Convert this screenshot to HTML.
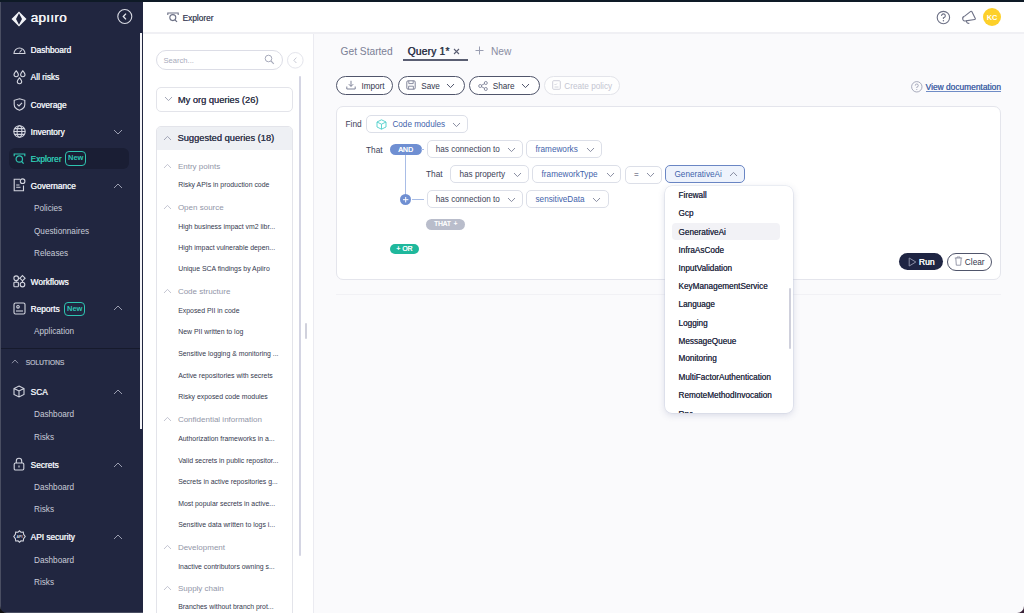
<!DOCTYPE html>
<html><head><meta charset="utf-8">
<style>
*{box-sizing:border-box;margin:0;padding:0}
html,body{width:1024px;height:613px;overflow:hidden;background:#fafafc;font-family:"Liberation Sans",sans-serif}
.a{position:absolute}
.t{position:absolute;line-height:12px;white-space:nowrap}
svg{position:absolute;overflow:visible}
/* sidebar */
#sb{position:absolute;left:0;top:0;width:143px;height:613px;background:#212640}
.si{color:#eceef4;font-size:8.3px;text-shadow:0.35px 0 0 currentColor;margin-top:0.4px}
.ss{color:#c9ccd8;font-size:8.2px;margin-top:0.5px}
.sic{fill:none;stroke:#d3d5df;stroke-width:1.1}
/* header */
#hd{position:absolute;left:143px;top:0;width:881px;height:34px;background:#fff;border-bottom:2px solid #f0f0f4}
/* middle */
#mid{position:absolute;left:143px;top:34px;width:171px;height:579px;background:#fff;border-right:1.4px solid #ebebf1}
.qh{color:#9296a8;font-size:8px;margin-top:0.8px}
.qi{color:#34384e;font-size:6.9px;margin-top:0.9px}
/* main */
.btn{position:absolute;height:19px;border:1px solid #50556b;border-radius:10px;background:#fff}
.box{position:absolute;border:1px solid #dcdfe8;border-radius:5px;background:#fff}
.bt{color:#3c4158;font-size:8.2px;margin-top:1px}
.bl{color:#3f63ab;font-size:8.2px;margin-top:1px}
.dd{color:#30344a;font-size:8.2px;margin-top:1px;text-shadow:0.1px 0 0 #30344a}
</style></head><body>


<!-- SIDEBAR -->
<div id="sb">
  <div class="a" style="left:0;top:0;width:1px;height:613px;background:#4a4e62"></div>
  <!-- logo -->
  <svg style="left:11px;top:11px" width="16" height="16" viewBox="0 0 16 16"><path d="M8 0.5 L15.5 8 L8 15.5 L0.5 8 Z M8 2.2 L11 8 L8 13.8 L5 8 Z" fill="#f2f3f7" fill-rule="evenodd"/></svg>
  <div class="t" style="left:30.5px;top:11px;font-size:13.5px;color:#f2f3f7;letter-spacing:0.3px;line-height:14px;text-shadow:0.4px 0 0 #f2f3f7">ap&#305;&#305;ro</div>
  <!-- collapse -->
  <svg style="left:117px;top:9px" width="16" height="16" viewBox="0 0 16 16"><circle cx="7.8" cy="7.5" r="7" fill="none" stroke="#d9dbe4" stroke-width="1.1"/><path d="M9 4.6 L6.3 7.5 L9 10.4" fill="none" stroke="#e9eaf0" stroke-width="1.3"/></svg>
  <!-- scrollbar -->
  <div class="a" style="left:140px;top:33px;width:2.1px;height:396px;background:#f4f4f7"></div>

  <!-- Dashboard -->
  <svg style="left:13px;top:44px" width="13" height="11" viewBox="0 0 13 11"><path class="sic" d="M1 9.5 A5.5 5.5 0 1 1 12 9.5 Z"/><path class="sic" d="M6.5 8.5 L9 5.5"/></svg>
  <div class="t si" style="left:30.5px;top:43.7px">Dashboard</div>
  <!-- All risks -->
  <svg style="left:13px;top:70px" width="13" height="14" viewBox="0 0 13 14"><path class="sic" d="M3.2 0.8 C4.6 2.6 5.4 3.6 5.4 4.5 A2.2 2.2 0 0 1 1 4.5 C1 3.6 1.8 2.6 3.2 0.8 Z M9.8 0.8 C11.2 2.6 12 3.6 12 4.5 A2.2 2.2 0 0 1 7.6 4.5 C7.6 3.6 8.4 2.6 9.8 0.8 Z M6.5 7.8 C7.9 9.6 8.7 10.6 8.7 11.5 A2.2 2.2 0 0 1 4.3 11.5 C4.3 10.6 5.1 9.6 6.5 7.8 Z"/></svg>
  <div class="t si" style="left:30.5px;top:70.8px">All risks</div>
  <!-- Coverage -->
  <svg style="left:13px;top:98px" width="13" height="13" viewBox="0 0 13 13"><path class="sic" d="M6.5 0.8 L11.8 2.3 V6.5 C11.8 9.5 9.3 11.3 6.5 12.3 C3.7 11.3 1.2 9.5 1.2 6.5 V2.3 Z"/><path class="sic" d="M4.2 6.3 L6 8 L9 4.8"/></svg>
  <div class="t si" style="left:30.5px;top:98.6px">Coverage</div>
  <!-- Inventory -->
  <svg style="left:13px;top:125px" width="13" height="13" viewBox="0 0 13 13"><circle class="sic" cx="6.5" cy="6.5" r="5.7"/><ellipse class="sic" cx="6.5" cy="6.5" rx="2.4" ry="5.7"/><path class="sic" d="M0.8 6.5 H12.2 M1.6 3.6 H11.4 M1.6 9.4 H11.4"/></svg>
  <div class="t si" style="left:30.5px;top:125.7px">Inventory</div>
  <svg style="left:113px;top:129px" width="10" height="6" viewBox="0 0 10 6"><path d="M1 1 L5 5 L9 1" fill="none" stroke="#9a9db0" stroke-width="1"/></svg>
  <!-- Explorer (active) -->
  <div class="a" style="left:9px;top:148px;width:120px;height:20.8px;border-radius:6px;background:#1a1e34"></div>
  <svg style="left:13px;top:153px" width="13" height="12" viewBox="0 0 13 12"><path d="M1.2 3.2 V1 H11.8 V3.2" fill="none" stroke="#2ec4b0" stroke-width="1.2"/><circle cx="6.3" cy="6" r="3.2" fill="none" stroke="#2ec4b0" stroke-width="1.2"/><path d="M8.6 8.4 L10.6 10.6" stroke="#2ec4b0" stroke-width="1.3"/></svg>
  <div class="t si" style="left:30.5px;top:153px;color:#2ec4b0">Explorer</div>
  <div class="a" style="left:65px;top:151px;width:21px;height:14.5px;border:1.1px solid #2ec4b0;border-radius:4px"></div>
  <div class="t" style="left:68px;top:152.3px;font-size:7.5px;color:#2ec4b0;font-weight:bold">New</div>
  <!-- Governance -->
  <svg style="left:13px;top:178px" width="13" height="14" viewBox="0 0 13 14"><path class="sic" d="M7 1.2 H1.2 V12.8 H10.5 V7.5"/><circle class="sic" cx="9.6" cy="3.2" r="2.3"/><path class="sic" d="M3.2 7 H6.5 M3.2 9.3 H7.5"/></svg>
  <div class="t si" style="left:30.5px;top:179.6px">Governance</div>
  <svg style="left:113px;top:183px" width="10" height="6" viewBox="0 0 10 6"><path d="M1 5 L5 1 L9 5" fill="none" stroke="#9a9db0" stroke-width="1"/></svg>
  <div class="t ss" style="left:34px;top:202.7px">Policies</div>
  <div class="t ss" style="left:34px;top:225.3px">Questionnaires</div>
  <div class="t ss" style="left:34px;top:247.9px">Releases</div>
  <!-- Workflows -->
  <svg style="left:13px;top:275px" width="13" height="13" viewBox="0 0 13 13"><circle class="sic" cx="3.2" cy="3.2" r="2.3"/><path class="sic" d="M9.5 0.6 L12.1 3.2 L9.5 5.8 L6.9 3.2 Z"/><rect class="sic" x="0.9" y="7.3" width="4.5" height="4.5" rx="0.8"/><circle class="sic" cx="9.5" cy="9.6" r="2.3"/><path class="sic" d="M5.5 3.2 H6.9 M3.2 5.5 V7.3 M9.5 5.8 V7.3"/></svg>
  <div class="t si" style="left:30.5px;top:275.3px">Workflows</div>
  <!-- Reports -->
  <svg style="left:13px;top:302px" width="13" height="13" viewBox="0 0 13 13"><rect class="sic" x="1" y="1" width="11" height="11" rx="1.5"/><circle class="sic" cx="5" cy="4.8" r="1.3"/><path class="sic" d="M3 9 H10"/></svg>
  <div class="t si" style="left:30.5px;top:302.4px">Reports</div>
  <div class="a" style="left:64px;top:301.6px;width:21px;height:14px;border:1.1px solid #2ec4b0;border-radius:4px"></div>
  <div class="t" style="left:67px;top:302.5px;font-size:7.5px;color:#2ec4b0;font-weight:bold">New</div>
  <svg style="left:113px;top:305px" width="10" height="6" viewBox="0 0 10 6"><path d="M1 5 L5 1 L9 5" fill="none" stroke="#9a9db0" stroke-width="1"/></svg>
  <div class="t ss" style="left:34px;top:325.6px">Application</div>
  <!-- separator -->
  <div class="a" style="left:1px;top:348px;width:139px;height:1px;background:#161a2c"></div>
  <svg style="left:11px;top:359px" width="8" height="5" viewBox="0 0 8 5"><path d="M1 4.2 L4 1 L7 4.2" fill="none" stroke="#9a9db0" stroke-width="0.9"/></svg>
  <div class="t" style="left:25.6px;top:356.6px;font-size:6.7px;color:#a9acbc;text-shadow:0.3px 0 0 #a9acbc">SOLUTIONS</div>
  <!-- SCA -->
  <svg style="left:13px;top:385px" width="12" height="13" viewBox="0 0 12 13"><path class="sic" d="M6 1 L11 3.5 V9.5 L6 12 L1 9.5 V3.5 Z M1 3.5 L6 6 L11 3.5 M6 6 V12"/></svg>
  <div class="t si" style="left:30.5px;top:385.8px">SCA</div>
  <svg style="left:113px;top:389px" width="10" height="6" viewBox="0 0 10 6"><path d="M1 5 L5 1 L9 5" fill="none" stroke="#9a9db0" stroke-width="1"/></svg>
  <div class="t ss" style="left:34px;top:408.8px">Dashboard</div>
  <div class="t ss" style="left:34px;top:431.5px">Risks</div>
  <!-- Secrets -->
  <svg style="left:13px;top:457px" width="12" height="14" viewBox="0 0 12 14"><rect class="sic" x="1.2" y="6" width="9.6" height="7" rx="1.2"/><path class="sic" d="M3.3 6 V4 A2.7 2.7 0 0 1 8.7 4 V6"/><path class="sic" d="M6 8.5 V10.5"/></svg>
  <div class="t si" style="left:30.5px;top:458.4px">Secrets</div>
  <svg style="left:113px;top:462px" width="10" height="6" viewBox="0 0 10 6"><path d="M1 5 L5 1 L9 5" fill="none" stroke="#9a9db0" stroke-width="1"/></svg>
  <div class="t ss" style="left:34px;top:481.5px">Dashboard</div>
  <div class="t ss" style="left:34px;top:503.7px">Risks</div>
  <!-- API security -->
  <svg style="left:13px;top:530px" width="13" height="13" viewBox="0 0 13 13"><path class="sic" d="M6.5 0.8 L8 2.2 L10.3 2 L10.6 4.3 L12.2 6.5 L10.6 8.7 L10.3 11 L8 10.8 L6.5 12.2 L5 10.8 L2.7 11 L2.4 8.7 L0.8 6.5 L2.4 4.3 L2.7 2 L5 2.2 Z"/><text x="6.5" y="8" font-size="3.6" text-anchor="middle" fill="#d3d5df" font-family="Liberation Sans" font-weight="bold">API</text></svg>
  <div class="t si" style="left:30.5px;top:531px">API security</div>
  <svg style="left:113px;top:534px" width="10" height="6" viewBox="0 0 10 6"><path d="M1 5 L5 1 L9 5" fill="none" stroke="#9a9db0" stroke-width="1"/></svg>
  <div class="t ss" style="left:34px;top:554px">Dashboard</div>
  <div class="t ss" style="left:34px;top:576.7px">Risks</div>
</div>

<!-- HEADER -->
<div id="hd">
  <svg style="left:24px;top:12px" width="12" height="11" viewBox="0 0 12 11"><path d="M0.8 3 V1 H11.2 V3" fill="none" stroke="#6d7186" stroke-width="1.1"/><circle cx="5.8" cy="5.6" r="3" fill="none" stroke="#6d7186" stroke-width="1.1"/><path d="M8 7.8 L10 9.9" stroke="#6d7186" stroke-width="1.2"/></svg>
  <div class="t" style="left:39.5px;top:11.8px;font-size:8.3px;color:#4b4f64;text-shadow:0.2px 0 0 #4b4f64">Explorer</div>
  <!-- help -->
  <svg style="left:793px;top:10px" width="15" height="15" viewBox="0 0 15 15"><circle cx="7.4" cy="7.6" r="6.2" fill="none" stroke="#6d7186" stroke-width="1.1"/><path d="M5.5 5.9 A1.9 1.9 0 1 1 7.4 7.7 V8.9" fill="none" stroke="#6d7186" stroke-width="1.1"/><circle cx="7.4" cy="10.8" r="0.7" fill="#6d7186"/></svg>
  <!-- megaphone -->
  <svg style="left:818px;top:10px" width="16" height="15" viewBox="0 0 16 15"><path d="M3.4 6.4 L9.7 1.4 Q10.4 0.9 10.8 1.6 L14.3 8.6 Q14.5 9.4 13.7 9.5 L4.7 10.9" fill="none" stroke="#6d7186" stroke-width="1.1" stroke-linejoin="round"/><path d="M3.4 6.4 A2.3 2.3 0 0 0 4.7 10.9" fill="none" stroke="#6d7186" stroke-width="1.1"/><path d="M5.4 10.8 C5.4 12.6 6.6 13.5 8.3 13.4" fill="none" stroke="#6d7186" stroke-width="1.1"/></svg>
  <!-- avatar -->
  <div class="a" style="left:840px;top:8px;width:18px;height:18px;border-radius:50%;background:#fdd02a"></div>
  <div class="t" style="left:840px;top:11.6px;width:18px;text-align:center;font-size:7.4px;font-weight:bold;color:#fff">KC</div>
</div>

<!-- MIDDLE PANEL -->
<div id="mid"><div class="a" style="left:0;top:-1px;width:171px;height:580px">
  <!-- search -->
  <div class="a" style="left:13px;top:17px;width:127px;height:20px;border:1px solid #dcdde6;border-radius:10px;background:#fff"></div>
  <div class="t" style="left:20.5px;top:22px;font-size:7.6px;color:#a7aabb">Search...</div>
  <svg style="left:121px;top:21px" width="11" height="11" viewBox="0 0 11 11"><circle cx="4.5" cy="4.5" r="3.3" fill="none" stroke="#a7aabb" stroke-width="1"/><path d="M7 7 L9.8 9.8" stroke="#a7aabb" stroke-width="1.1"/></svg>
  <svg style="left:144px;top:18.8px" width="17" height="17" viewBox="0 0 17 17"><circle cx="8.3" cy="8.3" r="7.8" fill="#fff" stroke="#e4e5ec" stroke-width="1"/><path d="M9.4 5.6 L6.8 8.3 L9.4 11" fill="none" stroke="#c8cad5" stroke-width="1"/></svg>
  <!-- scrollbar -->
  <div class="a" style="left:155.8px;top:43px;width:2.4px;height:480px;background:#d4d5e3;border-radius:1px"></div>
  <!-- my org queries -->
  <div class="a" style="left:13px;top:54.2px;width:137px;height:24.5px;border:1px solid #e3e4ea;border-radius:5px;background:#fff"></div>
  <svg style="left:21px;top:63px" width="9" height="6" viewBox="0 0 9 6"><path d="M1 1 L4.5 4.6 L8 1" fill="none" stroke="#9a9db0" stroke-width="0.9"/></svg>
  <div class="t" style="left:34.8px;top:60.5px;font-size:9.3px;color:#33374d;text-shadow:0.15px 0 0 #33374d">My org queries (26)</div>
  <!-- suggested queries -->
  <div class="a" style="left:13px;top:93px;width:137px;height:500px;border:1px solid #e3e4ea;border-radius:5px;background:#fff;overflow:hidden">
    <div class="a" style="left:0;top:0;width:137px;height:23.4px;background:#eef0f4"></div>
  </div>
  <svg style="left:20px;top:101.5px" width="9" height="6" viewBox="0 0 9 6"><path d="M1 5 L4.5 1.4 L8 5" fill="none" stroke="#9a9db0" stroke-width="0.9"/></svg>
  <div class="t" style="left:34.5px;top:99.1px;font-size:9.3px;color:#33374d;text-shadow:0.15px 0 0 #33374d">Suggested queries (18)</div>

  <svg style="left:20px;top:130px" width="9" height="6" viewBox="0 0 9 6"><path d="M1 5 L4.5 1.4 L8 5" fill="none" stroke="#b5b8c6" stroke-width="0.8"/></svg>
  <div class="t qh" style="left:34.9px;top:127.2px">Entry points</div>
  <div class="t qi" style="left:35.2px;top:145.3px">Risky APIs in production code</div>
  <svg style="left:20px;top:171px" width="9" height="6" viewBox="0 0 9 6"><path d="M1 5 L4.5 1.4 L8 5" fill="none" stroke="#b5b8c6" stroke-width="0.8"/></svg>
  <div class="t qh" style="left:34.9px;top:168.3px">Open source</div>
  <div class="t qi" style="left:35.2px;top:186.8px">High business impact vm2 libr...</div>
  <div class="t qi" style="left:35.2px;top:208.3px">High impact vulnerable depen...</div>
  <div class="t qi" style="left:35.2px;top:229.6px">Unique SCA findings by Apiiro</div>
  <svg style="left:20px;top:255px" width="9" height="6" viewBox="0 0 9 6"><path d="M1 5 L4.5 1.4 L8 5" fill="none" stroke="#b5b8c6" stroke-width="0.8"/></svg>
  <div class="t qh" style="left:34.9px;top:252.5px">Code structure</div>
  <div class="t qi" style="left:35.2px;top:271.3px">Exposed PII in code</div>
  <div class="t qi" style="left:35.2px;top:292px">New PII written to log</div>
  <div class="t qi" style="left:35.2px;top:314px">Sensitive logging &amp; monitoring ...</div>
  <div class="t qi" style="left:35.2px;top:336px">Active repositories with secrets</div>
  <div class="t qi" style="left:35.2px;top:357px">Risky exposed code modules</div>
  <svg style="left:20px;top:383px" width="9" height="6" viewBox="0 0 9 6"><path d="M1 5 L4.5 1.4 L8 5" fill="none" stroke="#b5b8c6" stroke-width="0.8"/></svg>
  <div class="t qh" style="left:34.9px;top:380px">Confidential information</div>
  <div class="t qi" style="left:35.2px;top:399px">Authorization frameworks in a...</div>
  <div class="t qi" style="left:35.2px;top:421px">Valid secrets in public repositor...</div>
  <div class="t qi" style="left:35.2px;top:442px">Secrets in active repositories g...</div>
  <div class="t qi" style="left:35.2px;top:464px">Most popular secrets in active...</div>
  <div class="t qi" style="left:35.2px;top:485px">Sensitive data written to logs i...</div>
  <svg style="left:20px;top:511px" width="9" height="6" viewBox="0 0 9 6"><path d="M1 5 L4.5 1.4 L8 5" fill="none" stroke="#b5b8c6" stroke-width="0.8"/></svg>
  <div class="t qh" style="left:34.9px;top:508px">Development</div>
  <div class="t qi" style="left:35.2px;top:527px">Inactive contributors owning s...</div>
  <svg style="left:20px;top:552px" width="9" height="6" viewBox="0 0 9 6"><path d="M1 5 L4.5 1.4 L8 5" fill="none" stroke="#b5b8c6" stroke-width="0.8"/></svg>
  <div class="t qh" style="left:34.9px;top:549px">Supply chain</div>
  <div class="t qi" style="left:35.2px;top:567px">Branches without branch prot...</div>
</div>
</div>
<!-- resize handle -->
<div class="a" style="left:304.8px;top:323px;width:2.2px;height:15.5px;background:#d0d1dc;border-radius:1px"></div>

<div id="main">
  <!-- tabs -->
  <div class="t" style="left:340.6px;top:45.7px;font-size:10.2px;color:#7b8096">Get Started</div>
  <div class="t" style="left:407.6px;top:45.7px;font-size:10.2px;color:#2f3449;text-shadow:0.4px 0 0 #2f3449;letter-spacing:0.2px">Query 1*</div>
  <svg style="left:453px;top:47.8px" width="7" height="7" viewBox="0 0 7 7"><path d="M1 1 L6 6 M6 1 L1 6" stroke="#5a5e73" stroke-width="1.1"/></svg>
  <div class="a" style="left:402.8px;top:58.7px;width:65.2px;height:2px;background:#5a5e72"></div>
  <svg style="left:474.5px;top:46px" width="9" height="9" viewBox="0 0 9 9"><path d="M4.5 0.5 V8.5 M0.5 4.5 H8.5" stroke="#9a9eb2" stroke-width="1"/></svg>
  <div class="t" style="left:491px;top:45.7px;font-size:10.2px;color:#8a8ea3">New</div>

  <!-- action buttons -->
  <div class="btn" style="left:335.8px;top:76px;width:57.3px;height:18.6px"></div>
  <svg style="left:346px;top:80px" width="10" height="10" viewBox="0 0 10 10"><path d="M5 0.8 V6.3 M2.8 4.2 L5 6.4 L7.2 4.2 M0.8 6.5 V9 H9.2 V6.5" fill="none" stroke="#7f8398" stroke-width="1"/></svg>
  <div class="t" style="left:361.4px;top:80.6px;font-size:8.2px;color:#33374d">Import</div>

  <div class="btn" style="left:397.7px;top:76px;width:67px;height:18.6px"></div>
  <svg style="left:406px;top:79.8px" width="10" height="10" viewBox="0 0 10 10"><rect x="0.8" y="0.8" width="8.4" height="8.4" rx="1.3" fill="none" stroke="#7f8398" stroke-width="1"/><path d="M2.8 0.8 V3.6 H7.2 V0.8 M2.6 9.2 V6.2 H7.4 V9.2" fill="none" stroke="#7f8398" stroke-width="0.9"/></svg>
  <div class="t" style="left:421.2px;top:80.6px;font-size:8.2px;color:#33374d">Save</div>
  <svg style="left:445.5px;top:82.6px" width="9" height="6" viewBox="0 0 9 6"><path d="M1 1 L4.5 4.6 L8 1" fill="none" stroke="#50556b" stroke-width="1"/></svg>

  <div class="btn" style="left:468.9px;top:76px;width:71.4px;height:18.6px"></div>
  <svg style="left:477.5px;top:80.5px" width="10" height="10" viewBox="0 0 10 10"><circle cx="2.2" cy="5" r="1.5" fill="none" stroke="#7f8398" stroke-width="0.9"/><circle cx="7.8" cy="2" r="1.5" fill="none" stroke="#7f8398" stroke-width="0.9"/><circle cx="7.8" cy="8" r="1.5" fill="none" stroke="#7f8398" stroke-width="0.9"/><path d="M3.5 4.3 L6.5 2.7 M3.5 5.7 L6.5 7.3" stroke="#7f8398" stroke-width="0.9"/></svg>
  <div class="t" style="left:492.8px;top:80.6px;font-size:8.2px;color:#33374d">Share</div>
  <svg style="left:520.5px;top:82.6px" width="9" height="6" viewBox="0 0 9 6"><path d="M1 1 L4.5 4.6 L8 1" fill="none" stroke="#50556b" stroke-width="1"/></svg>

  <div class="btn" style="left:544.3px;top:76px;width:75.7px;height:18.6px;border-color:#e3e4ea;background:#fefefe"></div>
  <svg style="left:551.5px;top:80px" width="9" height="10" viewBox="0 0 9 10"><rect x="0.7" y="0.7" width="7.6" height="8.6" rx="1" fill="none" stroke="#c9cbd6" stroke-width="0.9"/><path d="M2.5 4 L3.5 5 L5 3.5 M2.5 7 H6.5" fill="none" stroke="#c9cbd6" stroke-width="0.8"/></svg>
  <div class="t" style="left:564.3px;top:80.6px;font-size:8.2px;color:#c3c5d1">Create policy</div>

  <!-- view documentation -->
  <svg style="left:910.6px;top:81.2px" width="12" height="12" viewBox="0 0 12 12"><circle cx="5.8" cy="5.8" r="5.2" fill="none" stroke="#9ea2b4" stroke-width="0.9"/><path d="M4.3 4.6 A1.5 1.5 0 1 1 5.8 6 V6.9" fill="none" stroke="#9ea2b4" stroke-width="0.9"/><circle cx="5.8" cy="8.5" r="0.55" fill="#9ea2b4"/></svg>
  <div class="t" style="left:925.6px;top:80.9px;font-size:8.4px;color:#4766a8;text-shadow:0.2px 0 0 #4766a8">View documentation</div>
  <div class="a" style="left:925.8px;top:91px;width:75px;height:1px;background:#6f8cc6"></div>

  <!-- query card -->
  <div class="a" style="left:336.4px;top:106.4px;width:665px;height:173.6px;border:1px solid #e4e5ec;border-radius:7px;background:#fff"></div>
  <div class="a" style="left:336.4px;top:294.2px;width:665px;height:1px;background:#f1f1f5"></div>

  <div class="t" style="left:345.5px;top:118.3px;font-size:8.3px;color:#3c4158">Find</div>
  <div class="box" style="left:365.7px;top:115.2px;width:102px;height:18.2px"></div>
  <svg style="left:376px;top:119px" width="11" height="11" viewBox="0 0 11 11"><path d="M5.5 0.8 L10 3 V8 L5.5 10.2 L1 8 V3 Z M1 3 L5.5 5.2 L10 3 M5.5 5.2 V10.2" fill="none" stroke="#4fcfcb" stroke-width="0.9"/></svg>
  <div class="t bl" style="left:392.4px;top:118.3px">Code modules</div>
  <svg style="left:451.5px;top:121.8px" width="9" height="6" viewBox="0 0 9 6"><path d="M1 1 L4.5 4.6 L8 1" fill="none" stroke="#7d8197" stroke-width="0.9"/></svg>

  <div class="t" style="left:366px;top:143.8px;font-size:8.3px;color:#3c4158">That</div>
  <div class="a" style="left:389.6px;top:144px;width:32px;height:11px;border-radius:5.5px;background:#6f8fd2"></div>
  <div class="t" style="left:389.8px;top:143.7px;width:31.6px;text-align:center;font-size:7px;color:#fff;text-shadow:0.25px 0 0 #fff">AND</div>
  <div class="a" style="left:421.4px;top:149.2px;width:3px;height:1px;background:#a9bde6"></div>
  <div class="a" style="left:405.2px;top:154.8px;width:1px;height:42px;background:#a9bde6"></div>

  <div class="box" style="left:426.7px;top:140.4px;width:96.7px;height:17.6px"></div>
  <div class="t bt" style="left:435.7px;top:143.4px">has connection to</div>
  <svg style="left:507px;top:146.5px" width="9" height="6" viewBox="0 0 9 6"><path d="M1 1 L4.5 4.6 L8 1" fill="none" stroke="#7d8197" stroke-width="0.9"/></svg>
  <div class="box" style="left:526.3px;top:140.4px;width:76.2px;height:17.6px"></div>
  <div class="t bl" style="left:535.5px;top:143.4px">frameworks</div>
  <svg style="left:586px;top:146.5px" width="9" height="6" viewBox="0 0 9 6"><path d="M1 1 L4.5 4.6 L8 1" fill="none" stroke="#7d8197" stroke-width="0.9"/></svg>

  <div class="t" style="left:426px;top:168.1px;font-size:8.3px;color:#3c4158">That</div>
  <div class="box" style="left:449.5px;top:165.3px;width:79.7px;height:18.2px"></div>
  <div class="t bt" style="left:459.5px;top:168.4px">has property</div>
  <svg style="left:512.5px;top:171.5px" width="9" height="6" viewBox="0 0 9 6"><path d="M1 1 L4.5 4.6 L8 1" fill="none" stroke="#7d8197" stroke-width="0.9"/></svg>
  <div class="box" style="left:532.2px;top:165.3px;width:89.3px;height:18.2px"></div>
  <div class="t bl" style="left:541.6px;top:168.4px">frameworkType</div>
  <svg style="left:606px;top:171.5px" width="9" height="6" viewBox="0 0 9 6"><path d="M1 1 L4.5 4.6 L8 1" fill="none" stroke="#7d8197" stroke-width="0.9"/></svg>
  <div class="box" style="left:625.4px;top:165.5px;width:37px;height:18px"></div>
  <div class="t bt" style="left:634px;top:168.4px">=</div>
  <svg style="left:646px;top:171.5px" width="9" height="6" viewBox="0 0 9 6"><path d="M1 1 L4.5 4.6 L8 1" fill="none" stroke="#7d8197" stroke-width="0.9"/></svg>
  <div class="box" style="left:664.5px;top:165.3px;width:80.7px;height:18.2px;border-color:#6a86c4;background:#eef3fc"></div>
  <div class="t bl" style="left:674.5px;top:168.4px">GenerativeAi</div>
  <svg style="left:728.5px;top:171px" width="9" height="6" viewBox="0 0 9 6"><path d="M1 5 L4.5 1.4 L8 5" fill="none" stroke="#7d8197" stroke-width="0.9"/></svg>

  <div class="a" style="left:411.5px;top:198.9px;width:12.3px;height:1px;background:#a9bde6"></div>
  <div class="a" style="left:399.7px;top:193.8px;width:11.4px;height:11.4px;border-radius:50%;background:#6f8fd2"></div>
  <svg style="left:399.7px;top:193.8px" width="11.4" height="11.4" viewBox="0 0 11.4 11.4"><path d="M5.7 3 V8.4 M3 5.7 H8.4" stroke="#fff" stroke-width="1"/></svg>
  <div class="box" style="left:426.7px;top:190.2px;width:96.7px;height:18.2px"></div>
  <div class="t bt" style="left:435.7px;top:193.4px">has connection to</div>
  <svg style="left:507px;top:196.5px" width="9" height="6" viewBox="0 0 9 6"><path d="M1 1 L4.5 4.6 L8 1" fill="none" stroke="#7d8197" stroke-width="0.9"/></svg>
  <div class="box" style="left:526.3px;top:190.2px;width:82.7px;height:18.2px"></div>
  <div class="t bl" style="left:535.5px;top:193.4px">sensitiveData</div>
  <svg style="left:592px;top:196.5px" width="9" height="6" viewBox="0 0 9 6"><path d="M1 1 L4.5 4.6 L8 1" fill="none" stroke="#7d8197" stroke-width="0.9"/></svg>

  <div class="a" style="left:426px;top:218.7px;width:39.4px;height:11.1px;border-radius:5.5px;background:#b9bdcb"></div>
  <div class="t" style="left:426px;top:218.3px;width:39.4px;text-align:center;font-size:6.6px;color:#fff;text-shadow:0.25px 0 0 #fff;word-spacing:1px">THAT +</div>
  <div class="a" style="left:389.8px;top:243.6px;width:29.2px;height:10.8px;border-radius:5.4px;background:#1fb89c"></div>
  <div class="t" style="left:389.8px;top:243px;width:29.2px;text-align:center;font-size:6.8px;color:#fff;text-shadow:0.25px 0 0 #fff">+ OR</div>

  <!-- Run / Clear -->
  <div class="a" style="left:899.3px;top:252.9px;width:43.9px;height:17.4px;border-radius:9px;background:#1f2543"></div>
  <svg style="left:907.5px;top:256.6px" width="9" height="10" viewBox="0 0 9 10"><path d="M1.2 1 L7.8 5 L1.2 9 Z" fill="none" stroke="#8a8ea6" stroke-width="1"/></svg>
  <div class="t" style="left:918.7px;top:256px;font-size:8.6px;color:#fff;text-shadow:0.35px 0 0 #fff">Run</div>
  <div class="a" style="left:947px;top:252.9px;width:44.7px;height:17.8px;border-radius:9px;border:1px solid #50556b;background:#fff"></div>
  <svg style="left:954px;top:256.2px" width="9" height="10" viewBox="0 0 9 10"><path d="M0.8 2 H8.2 M3 2 V1 H6 V2 M1.8 2 L2.3 9.2 H6.7 L7.2 2" fill="none" stroke="#8d90a2" stroke-width="0.9"/></svg>
  <div class="t" style="left:964.8px;top:256px;font-size:8.3px;color:#33374d">Clear</div>

  <!-- dropdown -->
  <div class="a" style="left:664.6px;top:186.1px;width:128.6px;height:226.9px;border-radius:7px;background:#fff;box-shadow:0 2px 7px rgba(90,100,150,0.22), 0 0 0 0.6px rgba(214,218,232,0.55);overflow:hidden">
    <div class="a" style="left:7px;top:37px;width:108.6px;height:17.3px;border-radius:4px;background:#f2f2f6"></div>
    <div class="a" style="left:124.3px;top:102.2px;width:2.4px;height:61.2px;background:#cfd0dc;border-radius:1px"></div>
    <div class="t dd" style="left:13.9px;top:3.3px">Firewall</div>
    <div class="t dd" style="left:13.9px;top:21.3px">Gcp</div>
    <div class="t dd" style="left:13.9px;top:39.6px">GenerativeAi</div>
    <div class="t dd" style="left:13.9px;top:57.9px">InfraAsCode</div>
    <div class="t dd" style="left:13.9px;top:75.7px">InputValidation</div>
    <div class="t dd" style="left:13.9px;top:93.8px">KeyManagementService</div>
    <div class="t dd" style="left:13.9px;top:112.1px">Language</div>
    <div class="t dd" style="left:13.9px;top:130.5px">Logging</div>
    <div class="t dd" style="left:13.9px;top:148.8px">MessageQueue</div>
    <div class="t dd" style="left:13.9px;top:166.4px">Monitoring</div>
    <div class="t dd" style="left:13.9px;top:184.7px">MultiFactorAuthentication</div>
    <div class="t dd" style="left:13.9px;top:203.1px">RemoteMethodInvocation</div>
    <div class="t dd" style="left:13.9px;top:221.5px">Rpc</div>
  </div>
</div>

<div class="a" style="left:0;top:0;width:1024px;height:2px;background:#0e1a26"></div>
<div class="a" style="left:1px;top:612px;width:142px;height:1px;background:#4a4e62"></div>
<svg style="left:0;top:606px" width="7" height="7" viewBox="0 0 7 7"><path d="M0 0 A7 7 0 0 0 7 7 H0 Z" fill="#111"/></svg>
<svg style="left:1017px;top:606px" width="7" height="7" viewBox="0 0 7 7"><path d="M7 0 A7 7 0 0 1 0 7 H7 Z" fill="#3a2238"/></svg>
</body></html>
